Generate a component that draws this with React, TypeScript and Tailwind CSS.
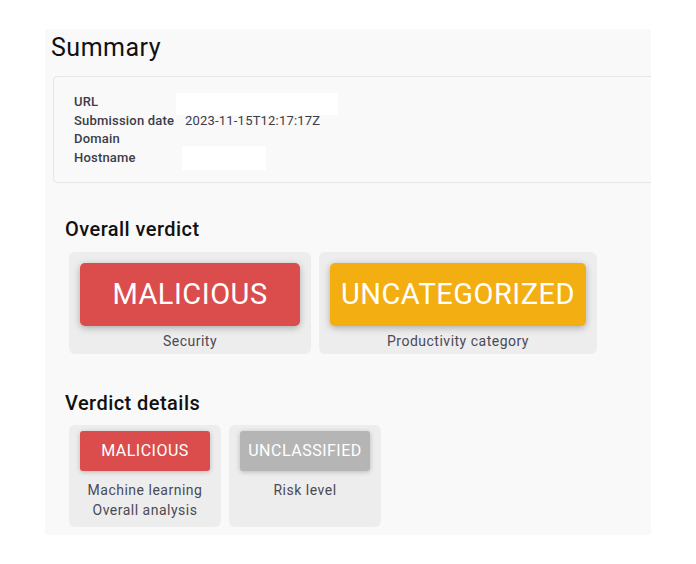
const font = "font-['Roboto','Liberation_Sans',sans-serif]";

type Row = { label: string; value?: string; redact?: string };

const rows: Row[] = [
  { label: "URL", redact: "left-[-9px] top-0 w-[162px] h-[22px]" },
  { label: "Submission date", value: "2023-11-15T12:17:17Z" },
  { label: "Domain" },
  { label: "Hostname", redact: "left-[-3px] top-[-3px] w-[84px] h-[24px]" },
];

function VerdictCard({
  verdict,
  label,
  color,
  width,
}: {
  verdict: string;
  label: string;
  color: string;
  width: string;
}) {
  return (
    <div className="flex flex-col items-center rounded-[6px] bg-[#ededed] px-[11px] pt-[11px] pb-[3px]">
      <div
        className={`flex h-[63px] items-center justify-center rounded-[5px] text-[29px] tracking-[0.5px] text-white shadow-[0_2px_7px_rgba(0,0,0,0.28)] ${color} ${width}`}
      >
        {verdict}
      </div>
      <div className="mt-[5px] text-[14px] leading-[20px] tracking-[0.5px] text-[#4a4a55]">{label}</div>
    </div>
  );
}

function DetailCard({
  verdict,
  lines,
  color,
}: {
  verdict: string;
  lines: string[];
  color: string;
}) {
  return (
    <div className="flex w-[152px] flex-col items-center rounded-[6px] bg-[#ededed] px-[11px] pt-[6px] pb-[7px]">
      <div
        className={`flex h-[40px] w-[130px] items-center justify-center rounded-[3px] text-[16px] tracking-[0.5px] text-white shadow-[0_1px_5px_rgba(0,0,0,0.22)] ${color}`}
      >
        {verdict}
      </div>
      <div className="mt-[9px] flex h-[40px] flex-col items-center text-[14px] leading-[20px] tracking-[0.5px] text-[#4a4a55]">
        {lines.map((l) => (
          <span key={l}>{l}</span>
        ))}
      </div>
    </div>
  );
}

export default function App() {
  return (
    <div className={`min-h-[564px] bg-white pt-[29px] pl-[45px] ${font}`}>
      <div className="w-[606px] overflow-hidden bg-[#f9f9f9] pt-[4px] pb-[8px]">
        <h1 className="pl-[6px] text-[25px] leading-[30px] tracking-[0.5px] text-[#111]">Summary</h1>

        {/* Summary box */}
        <div className="mt-[13px] ml-[8px] w-[640px] rounded-[4px] border border-[#e6e6e6] pt-[16px] pb-[15px] pl-[20px]">
          <div className="grid grid-cols-[111px_1fr] text-[13px] leading-[18.5px] tracking-[0.2px]">
            {rows.map((r) => (
              <div key={r.label} className="contents">
                <div className="font-medium text-[#3c3c4a]">{r.label}</div>
                <div className="relative text-[#3c3c4a]">
                  {r.value}
                  {r.redact && <div className={`absolute bg-white ${r.redact}`} />}
                </div>
              </div>
            ))}
          </div>
        </div>

        <h2 className="mt-[34px] pl-[20px] text-[20px] leading-[24px] font-medium tracking-[0.45px] text-[#111]">
          Overall verdict
        </h2>
        <div className="mt-[11px] flex gap-[8px] pl-[24px]">
          <VerdictCard verdict="MALICIOUS" label="Security" color="bg-[#db4c4d]" width="w-[220px]" />
          <VerdictCard
            verdict="UNCATEGORIZED"
            label="Productivity category"
            color="bg-[#f3af12]"
            width="w-[256px]"
          />
        </div>

        <h2 className="mt-[37px] pl-[20px] text-[20px] leading-[24px] font-medium tracking-[0.45px] text-[#111]">
          Verdict details
        </h2>
        <div className="mt-[10px] flex gap-[8px] pl-[24px]">
          <DetailCard
            verdict="MALICIOUS"
            lines={["Machine learning", "Overall analysis"]}
            color="bg-[#db4c4d]"
          />
          <DetailCard verdict="UNCLASSIFIED" lines={["Risk level"]} color="bg-[#b5b5b5]" />
        </div>
      </div>
    </div>
  );
}
